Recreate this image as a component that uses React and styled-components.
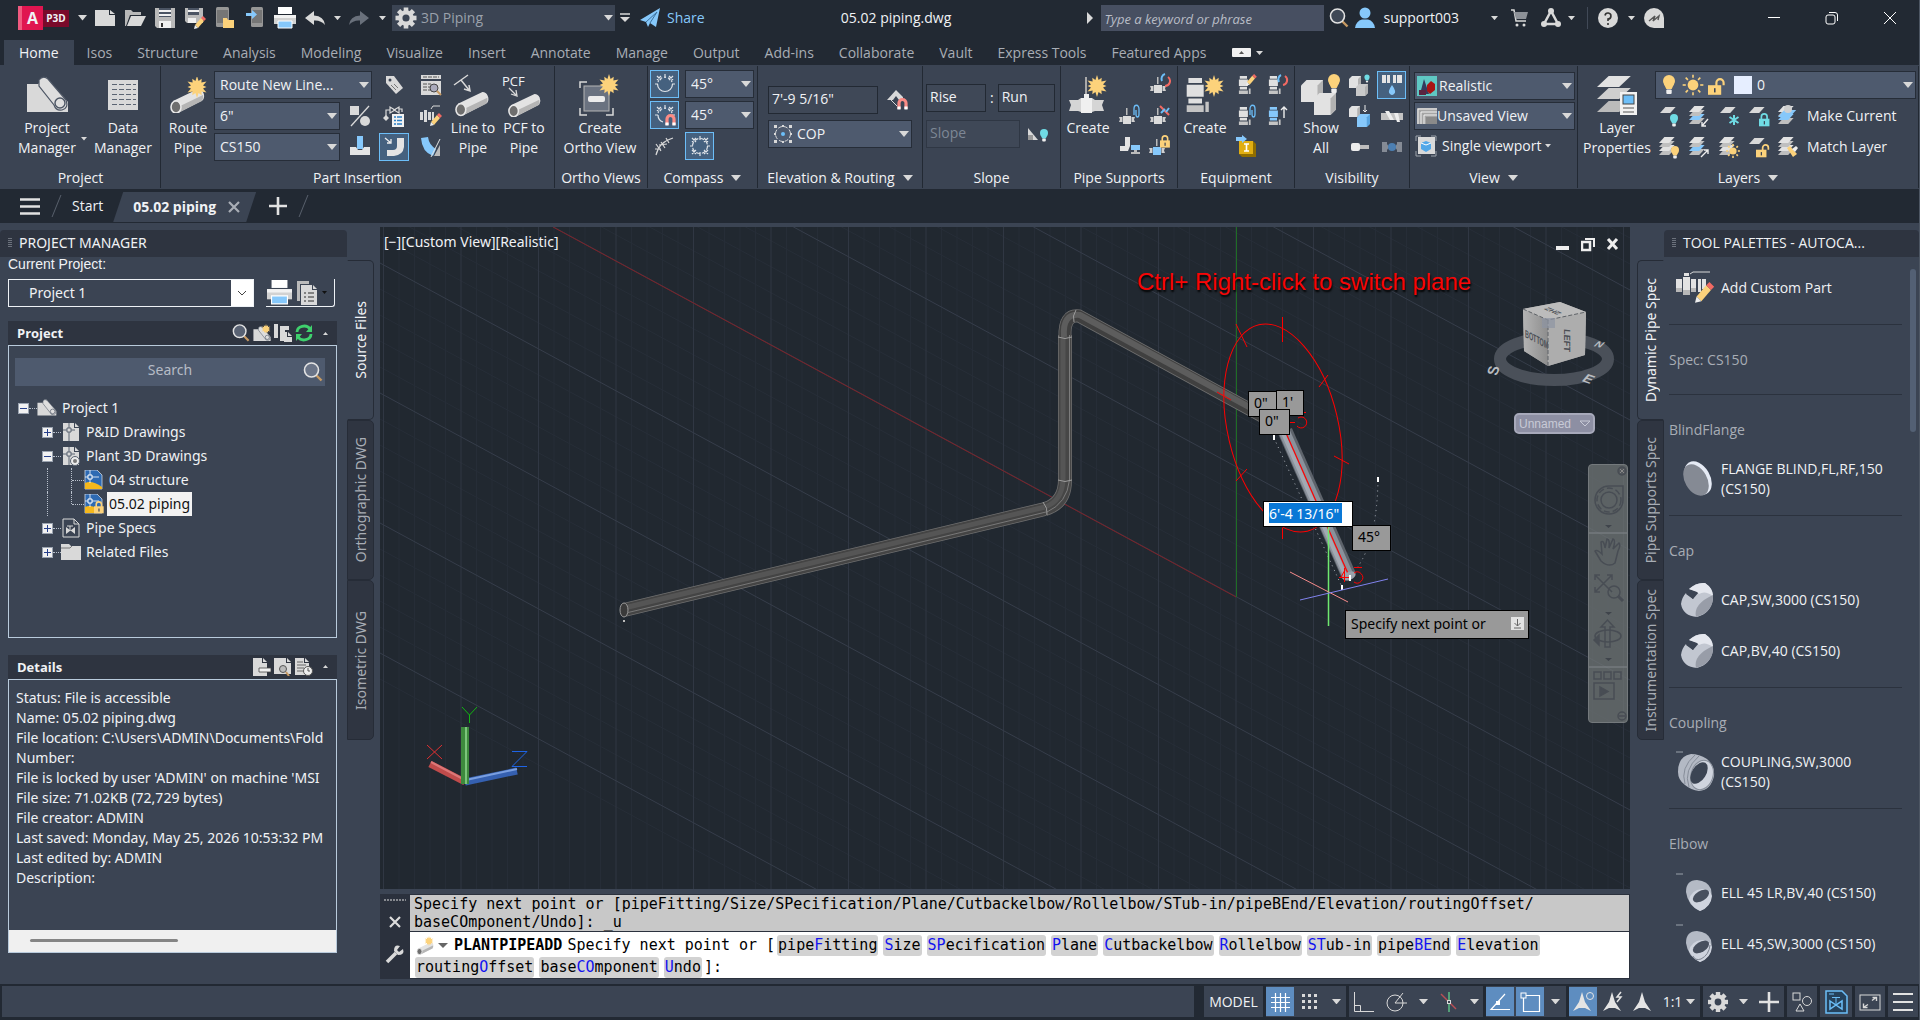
import React from "react";
import styled, { createGlobalStyle, css } from "styled-components";

const c = {
  dark: "#222933",
  panel: "#3b4453",
  head: "#2e3440",
  field: "#4e5a6e",
  text: "#f0f2f5",
  dim: "#a8adb5",
  icon: "#d9d9d9",
  blue: "#6cbef8",
  sky: "#86c8fb",
  yellow: "#fcd27b",
  teal: "#6fdbe4",
  red: "#f26a63",
  frame: "#b9cbdc",
  active: "#5e8dc0",
};

const ui = `"Open Sans", "Noto Sans", sans-serif`;
const wide = `"Noto Sans", "Open Sans", sans-serif`;
const mono = `"DejaVu Sans Mono", "Liberation Mono", monospace`;

const Global = createGlobalStyle`
  *, *::before, *::after { box-sizing: border-box; }
  body { margin: 0; background: ${c.dark}; color: ${c.text}; font: 14px/20px ${ui}; }
  button, input, select { font: inherit; color: inherit; margin: 0; }
  svg { display: block; flex: none; }
  ul, p, h2, h3 { margin: 0; padding: 0; list-style: none; font: inherit; }
`;

/* ------------------------------------------------------------------ */
/* Icon building blocks                                                */
/* ------------------------------------------------------------------ */

const Svg = ({ w = 24, h, vb, children }) => (
  <svg width={w} height={h || w} viewBox={vb || `0 0 ${w} ${h || w}`} fill="none" aria-hidden="true">
    {children}
  </svg>
);

const Burst = ({ x, y, r, fill = c.yellow }) => {
  const pts = [];
  for (let i = 0; i < 24; i++) {
    const a = (Math.PI * i) / 12 - Math.PI / 2;
    const rr = i % 2 ? r * 0.56 : i % 4 ? r * 0.86 : r;
    pts.push(`${(x + rr * Math.cos(a)).toFixed(1)},${(y + rr * Math.sin(a)).toFixed(1)}`);
  }
  return <polygon points={pts.join(" ")} fill={fill} />;
};

const Tube = ({ x = 0, y = 0, s = 1 }) => (
  <g transform={`translate(${x} ${y}) scale(${s})`}>
    <path d="M4 13 L29 1 A6 7 0 0 1 34 12 L9 25 Z" fill="#e3e3e3" />
    <path d="M7 20 L34 7 A6 7 0 0 1 33 13 L9 25 Z" fill="#b5b5b5" />
    <ellipse cx="7" cy="19" rx="5" ry="6" fill="#6e6e6e" stroke="#e8e8e8" strokeWidth="1.6" />
  </g>
);

const Sheet = ({ x, y, w = 13, h = 8, fill = c.icon }) => (
  <path d={`M${x + w * 0.45} ${y} H${x + w * 1.3} L${x + w * 0.85} ${y + h} H${x} Z`} fill={fill} />
);

const Bulb = ({ x, y, r, fill = c.yellow }) => (
  <g>
    <circle cx={x} cy={y} r={r} fill={fill} />
    <path d={`M${x - r * 0.85} ${y + r * 0.5} L${x - r * 0.45} ${y + r * 1.35} H${x + r * 0.45} L${x + r * 0.85} ${y + r * 0.5}Z`} fill={fill} />
    <rect x={x - r * 0.45} y={y + r * 1.4} width={r * 0.9} height={r * 0.75} rx="1" fill="#eee" />
  </g>
);

const Lock = ({ x, y, s = 1, fill = c.yellow, open }) => (
  <g transform={`translate(${x} ${y}) scale(${s})`}>
    <path d={open ? "M7 7 V4 a3 3 0 0 1 6 0 V6" : "M2.5 7 V4 a3 3 0 0 1 6 0 V7"} stroke={fill} strokeWidth="1.8" />
    <rect x="0" y="6" width="11" height="8" fill={fill} />
    <rect x="5" y="8.500" width="1.300" height="3.500" fill={c.panel} />
  </g>
);

const Sun = ({ x, y, r }) => (
  <g stroke={c.yellow} strokeWidth="1.600">
    <circle cx={x} cy={y} r={r * 0.6} fill={c.yellow} stroke="none" />
    {[0, 45, 90, 135, 180, 225, 270, 315].map((a) => (
      <line key={a} x1={x + r * 0.8} y1={y} x2={x + r * 1.15} y2={y} transform={`rotate(${a} ${x} ${y})`} />
    ))}
  </g>
);

const Pencil = ({ x, y, s = 1 }) => (
  <g transform={`translate(${x} ${y}) scale(${s})`}>
    <path d="M1 9 L7 2 L10 5 L4 12 Z" fill={c.yellow} />
    <path d="M7 2 L9 0 L12 3 L10 5 Z" fill={c.red} />
    <path d="M1 9 L0 13 L4 12 Z" fill="#eee" />
  </g>
);

const Box3 = ({ x, y, s, fill = "#e2e2e2", side = "#b2b2b2" }) => (
  <g>
    <path d={`M${x} ${y + s * 0.25} L${x + s * 0.25} ${y} H${x + s} V${y + s * 0.75} L${x + s * 0.75} ${y + s} H${x}Z`} fill={fill} />
    <path d={`M${x + s} ${y} V${y + s * 0.75} L${x + s * 0.75} ${y + s} V${y + s * 0.25}Z`} fill={side} />
  </g>
);

const Magnet = ({ x, y, s = 1 }) => (
  <g transform={`translate(${x} ${y}) scale(${s})`}>
    <path d="M2 12 V6 a3.500 3.500 0 0 1 7 0 V12" stroke="#fa8b85" strokeWidth="3.200" />
    <path d="M0.400 9.500 H3.600 V12.500 H0.400Z M7.400 9.500 H10.600 V12.500 H7.400Z" fill="#fff" />
  </g>
);

const Roll = ({ s = 1, x = 0, y = 0 }) => (
  <g transform={`translate(${x} ${y}) scale(${s})`}>
    <path d="M1 8 H12 L20 1 L42 26 V36 H1Z" fill={c.icon} />
    <path d="M13 4 Q17 -1 22 3 L40 24 Q43 32 36 34 Q30 35 28 29 L13 10Z" fill="#dedede" stroke="#4c5564" strokeWidth="1.200" />
    <circle cx="34" cy="27" r="5" stroke="#4c5564" strokeWidth="1.400" />
  </g>
);

const Caret = ({ w = 10, color = c.icon }) => (
  <svg width={w} height={w * 0.6} viewBox="0 0 10 6" aria-hidden="true">
    <path d="M0 0 H10 L5 6Z" fill={color} />
  </svg>
);

const cross = (x, y) => `M${x - 2} ${y - 2} l4 4 m0 -4 l-4 4`;

const Ring = ({ full, half }) => (
  <g stroke="#dfe3e8" strokeWidth="1.200">
    {full ? (
      <circle cx="12" cy="12" r="7.500" strokeDasharray="3.900 2" />
    ) : (
      <path d={half ? "M5 12 A7.500 7.500 0 0 0 10 19" : "M4.500 12 A7.500 7.500 0 0 0 19.500 12"} />
    )}
    {!full && <path d="M5 10 A7.500 7.500 0 0 1 19 10" strokeDasharray="2 2" />}
    <path d={`M2 12 H5 M19 12 H22 M12 2 V6 ${full ? "M12 18 V22" : ""}`} />
    <path d={`${cross(6, 6)} ${cross(18, 6)} ${full ? cross(6, 18) + cross(18, 18) : ""}`} />
  </g>
);

const Valve = ({ x = 0, y = 0, s = 1, fill = "#dcdcdc" }) => (
  <g transform={`translate(${x} ${y}) scale(${s})`}>
    <rect x="7" y="0" width="1.500" height="7" fill="#bbb" />
    <rect x="4" y="8" width="8" height="8" fill={fill} />
    <path d="M0 9 H3.500 V14 H0 L1 11.500Z M12.500 9 H16 L15 11.500 L16 14 H12.500Z" fill="#cfcfcf" />
  </g>
);

const Pump = ({ x = 0, y = 0, s = 1, fill = "#e0e0e0" }) => (
  <g transform={`translate(${x} ${y}) scale(${s})`}>
    <path d="M2 0 H10 V3 H2Z M1 4 H11 V11 H1Z M2 12 H10 V15 H2Z" fill={fill} />
    <path d="M1 16 H11 V20 H1Z M12 14 H14 V20 H12Z" fill="#c4c4c4" />
  </g>
);

const Layers3 = ({ blue, x = 0 }) => (
  <g>
    {[12, 8, 4, 0].map((y) => (
      <Sheet key={y} x={x} y={y + 2} w={12} h={6} fill={blue && y === 8 ? c.sky : y % 8 ? "#bfbfbf" : "#e2e2e2"} />
    ))}
  </g>
);

const GearShape = ({ x, y, r, hole = c.panel }) => (
  <g transform={`translate(${x} ${y})`}>
    {[0, 45, 90, 135].map((a) => (
      <rect key={a} x={-r * 0.22} y={-r} width={r * 0.44} height={r * 2} fill={c.icon} transform={`rotate(${a})`} />
    ))}
    <circle r={r * 0.74} fill={c.icon} />
    <circle r={r * 0.34} fill={hole} />
  </g>
);

const LensShape = ({ s = 20, fill = "#596273" }) => (
  <Svg w={s} vb="0 0 20 20">
    <path d="M13 13 L18.500 18.500" stroke="#c79a63" strokeWidth="2.400" />
    <circle cx="8.500" cy="8" r="7" fill={fill} stroke="#e3e3e3" strokeWidth="1.600" />
  </Svg>
);

const Printer = ({ s = 22 }) => (
  <Svg w={s} vb="0 0 22 22">
    <path d="M4 0 H18 V7 H4Z" fill="#fff" />
    <path d="M0 8 H22 V17 H0Z" fill="#d2d2d2" />
    <path d="M0 8 H22 V11 H0Z" fill="#f2f2f2" />
    <path d="M4 14 H18 V21 H4Z" fill={c.sky} stroke="#fff" />
  </Svg>
);

const Doc = ({ x = 0, y = 0, w = 16, h = 18 }) => (
  <path d={`M${x} ${y} H${x + w - 5} V${y + 5} H${x + w} V${y + h} H${x}Z M${x + w - 4} ${y} L${x + w} ${y + 4} H${x + w - 4}Z`} fill={c.icon} />
);

/* ------------------------------------------------------------------ */
/* Shared controls                                                     */
/* ------------------------------------------------------------------ */

const Button = styled.button`
  display: inline-flex;
  align-items: center;
  justify-content: center;
  gap: 4px;
  padding: 0;
  border: 0;
  background: none;
  white-space: nowrap;
`;

const IconButton = styled(Button)`
  width: ${(p) => p.$w || 30}px;
  height: ${(p) => p.$h || 28}px;
  flex: none;
  ${(p) =>
    p.$on &&
    css`
      background: #45617f;
      border: 1px solid ${c.blue};
    `}
`;

const SelectBox = styled.div`
  position: relative;
  display: flex;
  align-items: center;
  gap: ${(p) => p.$gap ?? 4}px;
  width: ${(p) => (p.$w ? `${p.$w}px` : "auto")};
  height: 28px;
  padding-left: ${(p) => p.$pl ?? 5}px;
  color: ${c.text};
  background: ${c.field};
  border: 1px solid #262d38;
  grid-column: ${(p) => p.$span || "auto"};
`;

const NativeSelect = styled.select`
  flex: 1;
  min-width: 0;
  height: 24px;
  padding: 0 14px 0 0;
  border: 0;
  appearance: none;
  background: none;
  line-height: 24px;
`;

const CaretSlot = styled.span`
  position: absolute;
  right: 2px;
  pointer-events: none;
`;

const Select = ({ label, value, w, span, icon, pl, gap }) => (
  <SelectBox $w={w} $span={span} $pl={pl} $gap={gap}>
    {icon}
    <NativeSelect aria-label={label} defaultValue={value}>
      <option>{value}</option>
    </NativeSelect>
    <CaretSlot><Caret /></CaretSlot>
  </SelectBox>
);

const TextField = styled.input`
  width: ${(p) => p.$w}px;
  height: 28px;
  padding: 0 3px 4px;
  border: 1px solid #222933;
  background: #3f4857;
  &:disabled { border-color: #2f3744; }
  &:disabled, &::placeholder { color: #7d8795; opacity: 1; }
`;

/* ------------------------------------------------------------------ */
/* Title bar                                                           */
/* ------------------------------------------------------------------ */

const Shell = styled.div`
  display: flex;
  flex-direction: column;
  min-height: 100vh;
  height: 100vh;
  border-right: 1px solid #4d5663;
  overflow: hidden;
`;

const TitleBar = styled.header`
  display: flex;
  align-items: center;
  height: 36px;
  padding-left: 18px;
`;

const Logo = styled.span`
  display: flex;
  align-items: center;
  margin-right: 5px;
  font-weight: 700;
  span:first-child { width: 25px; line-height: 24px; background: #e01550; text-align: center; font-size: 16px; border-left: 4px solid #f05a80; }
  span:last-child { width: 26px; line-height: 17px; background: #7a0a2a; text-align: center; font-size: 10px; }
`;

const Workspace = styled(SelectBox)`
  width: 223px;
  height: 26px;
  padding-left: 3px;
  margin-left: 2px;
  border: 0;
  background: ${c.panel};
  color: #9aa1ab;
`;

const Push = styled.span` flex: ${(p) => p.$n || 1}; `;

const Share = styled(Button)` margin-left: 5px; gap: 7px; color: ${c.sky}; `;

const Finder = styled.input`
  width: 223px;
  height: 26px;
  margin-left: 8px;
  padding: 0 3px;
  border: 0;
  background: #474f61;
  font-style: italic;
  &::placeholder { color: #b9bdc6; opacity: 1; font-size: 13px; }
`;

const User = styled(Button)` gap: 7px; margin-right: 32px; `;
const Rule = styled.span` width: 1px; height: 22px; margin: 0 7px; background: #414957; `;
const TitleText = styled.h2` color: ${c.text}; `;

const quick = [
  ["New", <Svg w={22}><path d="M1 3 H15 V8 H21 V19 H1Z" fill={c.icon} /><path d="M16 3 L21 7 H16Z" fill={c.icon} /></Svg>],
  ["Open", <Svg w={22}><path d="M1 3 H7 L9 5 H17 V8 H6 L2 19 H1Z" fill="#b8b8b8" /><path d="M7 9 H22 L17 19 H3Z" fill={c.icon} /></Svg>],
  ["Save", <Svg w={22}><path d="M1 1 H21 V21 H3 L1 19Z" fill="#b9b9b9" /><path d="M5 1 H17 V10 H5Z" fill="#4b5463" /><path d="M5 3 H17 V5 H5Z M5 7 H17 V9 H5Z M5 14 H17 V21 H5Z" fill="#f0f0f0" /><path d="M7 16 H9 V20 H7Z" fill="#333" /></Svg>],
  ["Save As", <Svg w={22}><path d="M1 1 H19 V16 H3 L1 14Z" fill="#b9b9b9" /><path d="M4 1 H15 V8 H4Z" fill="#4b5463" /><path d="M4 3 H15 V5 H4Z M4 11 H12 V16 H4Z" fill="#f0f0f0" /><Pencil x={10} y={9} /></Svg>],
  ["Open from mobile", <Svg w={22}><rect x="2" y="0" width="13" height="20" rx="1.500" fill="#969696" /><path d="M3 3 H14 V16 H3Z" fill="#767676" /><path d="M9 11 H13 L14 13 H20 V21 H9Z" fill={c.yellow} /></Svg>],
  ["Save to mobile", <Svg w={22}><rect x="7" y="0" width="12" height="20" rx="1.500" fill="#969696" /><path d="M8 3 H18 V16 H8Z" fill="#767676" /><path d="M2 6 H8 V3 L13 7.500 L8 12 V9 H2Z" fill={c.sky} /></Svg>],
  ["Plot", <Printer />],
  ["Undo", <Svg w={22}><path d="M1 11 L10 4 V8.500 Q20 9 21 18 Q17 13 10 13.500 V18Z" fill={c.icon} /></Svg>],
];

const TopBar = () => (
  <TitleBar>
    <Logo><span>A</span><span>P3D</span></Logo>
    <IconButton $w={16} aria-label="Application menu"><Caret w={9} /></IconButton>
    {quick.map(([n, i]) => <IconButton key={n} aria-label={n}>{i}</IconButton>)}
    <IconButton $w={14} aria-label="Undo list"><Caret w={7} /></IconButton>
    <IconButton aria-label="Redo"><Svg w={22}><path d="M21 11 L12 4 V8.500 Q2 9 1 18 Q5 13 12 13.500 V18Z" fill="#69707b" /></Svg></IconButton>
    <IconButton $w={16} aria-label="Redo list"><Caret w={7} /></IconButton>
    <Workspace>
      <Svg w={22}><GearShape x={11} y={11} r={10.5} /></Svg>
      <NativeSelect aria-label="Workspace" defaultValue="3D Piping"><option>3D Piping</option></NativeSelect>
      <CaretSlot><Caret w={9} /></CaretSlot>
    </Workspace>
    <IconButton $w={20} aria-label="Customize toolbar"><Svg w={10} h={10}><path d="M0 1 H10" stroke={c.icon} strokeWidth="1.500" /><path d="M0 4 H10 L5 9Z" fill={c.icon} /></Svg></IconButton>
    <Share>
      <Svg w={20}><path d="M0 12 L20 0 L16 19 L10 15 L8 19 L6 14Z" fill={c.sky} /><path d="M6 14 L17 4 L10 15" stroke="#3b6f9c" /></Svg>
      Share
    </Share>
    <Push />
    <TitleText>05.02 piping.dwg</TitleText>
    <Push />
    <Svg w={6} h={12}><path d="M0 0 L6 6 L0 12Z" fill={c.icon} /></Svg>
    <Finder aria-label="Search help" placeholder="Type a keyword or phrase" />
    <IconButton aria-label="Search"><LensShape fill="#3f4856" /></IconButton>
    <User>
      <Svg w={22}><circle cx="11" cy="6" r="5.500" fill={c.sky} /><path d="M1 21 Q2 14 8 12.500 H14 Q20 14 21 21Z" fill={c.sky} /></Svg>
      support003
    </User>
    <Caret w={7} />
    <IconButton $w={42} aria-label="App store"><Svg w={20}><path d="M2 2 H5 L7 13 H17" stroke={c.icon} strokeWidth="1.500" /><path d="M5 4 H19 L17 11 H7Z" fill="#8d9198" /><circle cx="8" cy="17" r="1.500" fill={c.icon} /><circle cx="15" cy="17" r="1.500" fill={c.icon} /></Svg></IconButton>
    <IconButton $w={22} aria-label="Autodesk apps"><Svg w={20}><path d="M10 3 L3 16 H17Z" stroke={c.icon} strokeWidth="2.500" /><circle cx="10" cy="3" r="3" fill={c.icon} /><circle cx="3" cy="16" r="3" fill={c.icon} /><circle cx="17" cy="16" r="3" fill={c.icon} /></Svg></IconButton>
    <IconButton $w={18} aria-label="Apps list"><Caret w={7} /></IconButton>
    <Rule />
    <IconButton $w={26} aria-label="Help"><Svg w={20}><circle cx="10" cy="10" r="10" fill={c.icon} /><path d="M7 7.500 a3 3 0 1 1 3 3.500 V13 M10 15 V17" stroke="#333" strokeWidth="1.600" /></Svg></IconButton>
    <IconButton $w={20} aria-label="Help list"><Caret w={7} /></IconButton>
    <IconButton $w={26} aria-label="Assistant"><Svg w={20}><path d="M10 0 a10 10 0 0 1 10 10 V20 H10 A10 10 0 0 1 10 0Z" fill={c.icon} /><path d="M5 13 L11 8 L9 13 L15 8 L14 12" stroke="#555" strokeWidth="1.400" /></Svg></IconButton>
    <Push $n="0 0 78px" />
    <IconButton $w={58} aria-label="Minimize"><Svg w={14}><path d="M1 6.500 H13" stroke="#fff" /></Svg></IconButton>
    <IconButton $w={58} aria-label="Restore"><Svg w={14}><rect x="1" y="4" width="9" height="9" rx="2" stroke="#fff" /><path d="M4 1.500 H10 Q12.500 1.500 12.500 4 V10" stroke="#fff" /></Svg></IconButton>
    <IconButton $w={58} aria-label="Close"><Svg w={14}><path d="M1 1 L13 13 M13 1 L1 13" stroke="#fff" /></Svg></IconButton>
  </TitleBar>
);

/* ------------------------------------------------------------------ */
/* Ribbon                                                              */
/* ------------------------------------------------------------------ */

const Tabs = styled.nav`
  display: flex;
  align-items: center;
  gap: 1px;
  height: 29px;
  padding: 4px 0 0 4px;
`;

const Tab = styled(Button)`
  height: 25px;
  padding: 0 ${(p) => (p.$on ? 15 : 12)}px;
  color: ${(p) => (p.$on ? c.text : c.dim)};
  background: ${(p) => (p.$on ? c.panel : "none")};
`;

const Ribbon = styled.section`
  display: flex;
  height: 124px;
  padding: 1px 0 0 1px;
  background: ${c.panel};
`;

const Group = styled.section`
  display: flex;
  flex-direction: column;
  flex: ${(p) => (p.$w ? `0 0 ${p.$w}px` : "1 1 0")};
  min-width: 0;
  height: 122px;
  border-right: 1px solid ${c.dark};
`;

const Tools = styled.div`
  display: flex;
  flex: 1;
  align-items: flex-start;
  gap: ${(p) => p.$gap ?? 4}px;
  padding: ${(p) => p.$pt ?? 5}px 0 0 ${(p) => p.$pl ?? 4}px;
`;

const GroupTitle = styled.h3`
  display: flex;
  align-items: center;
  justify-content: center;
  gap: 8px;
  height: 21px;
  white-space: nowrap;
`;

const Big = styled(Button)`
  position: relative;
  flex-direction: column;
  gap: 0;
  width: ${(p) => p.$w}px;
  span { display: flex; align-items: center; justify-content: center; height: 47px; }
`;

const SideCaret = styled.i`
  position: absolute;
  right: -5px;
  top: 66px;
`;

const Cells = styled.div`
  display: grid;
  grid-template-columns: ${(p) => p.$cols};
  grid-auto-rows: 28px;
  gap: 3px ${(p) => p.$gap ?? 2}px;
  align-items: center;
  justify-items: ${(p) => (p.$fill ? "stretch" : "center")};
`;

const Stack = styled.div`
  display: flex;
  flex-direction: column;
  gap: ${(p) => p.$gap ?? 3}px;
`;

const Line = styled.div`
  display: flex;
  align-items: center;
  gap: ${(p) => p.$gap ?? 6}px;
`;

const BigTool = ({ w, icon, a, b, caret }) => (
  <Big $w={w}>
    <span>{icon}</span>
    <div>{a}</div>
    {b && <div>{b}</div>}
    {caret && <SideCaret><Caret w={6} /></SideCaret>}
  </Big>
);

const Tool = ({ n, on, w, children }) => (
  <IconButton $w={w || 28} $on={on} aria-label={n}>
    {children}
  </IconButton>
);

const TextTool = styled(Button)`
  justify-content: flex-start;
  height: 28px;
  gap: 4px;
`;

const PcfLabel = styled.b`
  position: absolute;
  top: 0;
  left: 2px;
  font-weight: 400;
  font-size: 13px;
`;

const menu = ["Home", "Isos", "Structure", "Analysis", "Modeling", "Visualize", "Insert", "Annotate", "Manage", "Output", "Add-ins", "Collaborate", "Vault", "Express Tools", "Featured Apps"];

const RibbonBar = () => (
  <>
    <Tabs>
      {menu.map((m, i) => <Tab key={m} $on={i === 0}>{m}</Tab>)}
      <Tab aria-label="Ribbon display">
        <Svg w={32} h={12}><rect x="1" y="1" width="19" height="9" rx="1" fill="#f1f1f1" /><path d="M8 7 L10.500 4 L13 7Z" fill="#555" /><path d="M25 4 H32 L28.500 8Z" fill={c.icon} /></Svg>
      </Tab>
    </Tabs>
    <Ribbon>
      <Group $w={160}>
        <Tools $pl={11} $gap={6}>
          <BigTool w={70} a="Project" b="Manager" caret icon={<Svg w={43} h={38}><Roll /></Svg>} />
          <BigTool w={70} a="Data" b="Manager" icon={<Svg w={30}><path d="M0 0 H30 V30 H0Z" fill={c.icon} /><path d="M4 4.500 H28 M4 9.500 H28 M4 14.500 H28 M4 19.500 H28 M4 24.500 H28" stroke="#5b6472" strokeDasharray="5 2" /></Svg>} />
        </Tools>
        <GroupTitle>Project</GroupTitle>
      </Group>

      <Group $w={394}>
        <Tools $gap={3}>
          <BigTool w={46} a="Route" b="Pipe" icon={<Svg w={40} h={36}><Tube x={1} y={11} /><Burst x={29} y={10} r={11} /></Svg>} />
          <Cells $cols="126px 25px 30px 30px" $gap={7} $fill>
            <Select label="Line number" value="Route New Line..." span="span 2" />
            <Tool n="Tag" w={30}><Svg w={24}><path d="M4 3 H12 L21 15 L14 21 L4 10Z" fill={c.icon} /><circle cx="8" cy="7" r="1.500" fill={c.panel} /><path d="M9 12 L14 17 M12 11 L16 15" stroke="#777" /></Svg></Tool>
            <Tool n="Spec viewer" w={30}><Svg w={24}><path d="M2 2 H22 V6 H2Z M2 8 H22 V22 H2Z" fill={c.icon} /><path d="M4 4 H20 M4 11 H12 M4 14 H11 M4 17 H11" stroke="#555" strokeDasharray="4 1" /><circle cx="15" cy="15" r="4" fill="#aab" stroke="#444" /><path d="M18 18 L22 22" stroke="#c79a63" strokeWidth="2" /></Svg></Tool>
            <Select label="Pipe size" value={'6"'} />
            <Tool n="Toggle fixed" w={25}><Svg w={24}><path d="M2 2 H11 V11 H2Z" fill={c.icon} /><circle cx="17" cy="17" r="5" fill={c.icon} /><path d="M3 22 L21 2" stroke={c.icon} strokeWidth="1.300" /></Svg></Tool>
            <Tool n="Assign tag" w={30}><Svg w={24}><path d="M4 12 V6 H8 M20 8 V5 H17 M8 3 V9 L13 6Z M17 3 V9 L12 6Z" stroke={c.icon} strokeWidth="1.200" /><path d="M4 11 L7 14 L4 17 L1 14Z" fill={c.icon} /><rect x="10" y="10" width="12" height="13" fill="#f2f2f2" /><path d="M12 13 H14 M12 16.500 H14 M12 20 H14 M15 13 H20 M15 16.500 H20 M15 20 H20" stroke="#2c7fc4" strokeWidth="1.500" /></Svg></Tool>
            <Tool n="Custom part" w={30}><Svg w={24}><path d="M1 8 H4 V16 H1Z M5 6 H8 V18 H5Z M9 8 H12 V16 H9Z M13 8 H15 V16 H13Z" fill={c.icon} /><path d="M12 5 L14 2 H21" stroke={c.icon} /><Pencil x={11} y={9} /></Svg></Tool>
            <Select label="Pipe spec" value="CS150" />
            <Tool n="Stub-in" w={25}><Svg w={24}><rect x="9" y="1" width="6" height="13" fill={c.sky} /><path d="M2 12 H8 L10 15 H14 L16 12 H22 V20 H2Z" fill="#e4e4e4" /></Svg></Tool>
            <Tool n="Elbow" on w={30}><Svg w={24}><path d="M15 3 H22 V12 Q21 20 12 21 H5 V15 H11 Q15 15 15 11Z" fill="#e4e4e4" /><path d="M3 3 L9 8 M9 4 V8 H5" stroke="#eee" strokeWidth="1.300" /></Svg></Tool>
            <Tool n="Pipe bend" w={30}><Svg w={24}><path d="M2 3 L9 2 Q10 10 17 14 L14 21 Q3 17 2 3Z" fill={c.sky} /><path d="M15 21 L21 10 V21Z" fill="#bbb" /><path d="M12 22 L21 4" stroke="#e4e4e4" /></Svg></Tool>
          </Cells>
          <BigTool w={48} a="Line to" b="Pipe" icon={<Svg w={40} h={44}><path d="M1 12 L15 2 M8 7 L16 17 M11 16 L17 18 L16 12" stroke={c.icon} strokeWidth="1.500" /><Tube x={1} y={18} s={0.98} /></Svg>} />
          <Big $w={48}>
            <PcfLabel>PCF</PcfLabel>
            <span><Svg w={40} h={44}><path d="M5 15 L12 22 M7 21 L13 23 L12 17" stroke={c.icon} strokeWidth="1.300" /><Tube x={3} y={20} s={0.95} /></Svg></span>
            <div>PCF to</div>
            <div>Pipe</div>
          </Big>
        </Tools>
        <GroupTitle>Part Insertion</GroupTitle>
      </Group>

      <Group $w={93}>
        <Tools $pl={5}>
          <BigTool w={80} a="Create" b="Ortho View" icon={<Svg w={42}><rect x="5" y="12" width="25" height="25" fill="#6a7280" stroke="#b5b5b5" /><path d="M1 14 V8 H8 M1 34 V41 H8 M34 34 V41 H27" stroke={c.icon} strokeWidth="1.500" /><rect x="9" y="22" width="17" height="6" rx="2" fill="#ececec" /><Burst x={30} y={11} r={11} /></Svg>} />
        </Tools>
        <GroupTitle>Ortho Views</GroupTitle>
      </Group>

      <Group $w={110}>
        <Tools $pl={2} $pt={4}>
          <Cells $cols="29px 69px" $gap={6} $fill>
            <Tool n="Toggle compass" on w={29}><Svg w={24}><Ring /></Svg></Tool>
            <Select label="Compass snap" value="45°" />
            <Tool n="Toggle snaps" on w={29}><Svg w={24}><Ring half /><Magnet x={12} y={10} /></Svg></Tool>
            <Select label="Tick marks" value="45°" />
            <Tool n="Tolerance" w={29}><Svg w={24}><path d="M3 21 Q6 8 20 4 M3 10 L8 17 M2 15 H8 M8 8 L12 14 M6 11 L14 10 M13 4 L16 9" stroke={c.icon} strokeWidth="1.200" /></Svg></Tool>
            <Tool n="Tick mark display" on w={29}><Svg w={24}><Ring full /></Svg></Tool>
          </Cells>
        </Tools>
        <GroupTitle>Compass <Caret /></GroupTitle>
      </Group>

      <Group $w={165}>
        <Tools $pl={10} $pt={20}>
          <Stack $gap={6}>
            <Line>
              <TextField $w={110} aria-label="Elevation" defaultValue={'7\'-9 5/16"'} />
              <Tool n="Snap elevation"><Svg w={24}><path d="M1 12 L10 2 L17 9 V12 H13 L10 8 L7 12Z" fill={c.icon} /><path d="M5 12 L11 18" stroke={c.icon} /><Magnet x={11} y={9} /></Svg></Tool>
            </Line>
            <Select w={144} pl={4} gap={4} label="Routing offset" value="COP" icon={<Svg w={20}><path d="M1 1 H4 V4 H1Z M16 1 H19 V4 H16Z M1 16 H4 V19 H1Z M16 16 H19 V19 H16Z M9 1 H11 V3 H9Z M9 17 H11 V19 H9Z M1 9 H3 V11 H1Z M17 9 H19 V11 H17Z" fill={c.icon} /><circle cx="10" cy="10" r="7.500" stroke={c.icon} strokeDasharray="4 2" /><circle cx="10" cy="10" r="2" fill={c.blue} /></Svg>} />
          </Stack>
        </Tools>
        <GroupTitle>Elevation &amp; Routing <Caret /></GroupTitle>
      </Group>

      <Group $w={138}>
        <Tools $pl={3} $pt={18}>
          <Stack $gap={8}>
            <Line $gap={4}>
              <TextField $w={60} aria-label="Rise" defaultValue="Rise" />
              <span>:</span>
              <TextField $w={57} aria-label="Run" defaultValue="Run" />
            </Line>
            <Line $gap={4}>
              <TextField $w={94} aria-label="Slope" placeholder="Slope" disabled />
              <Tool n="Show slope"><Svg w={24}><path d="M2 6 L12 18 H2Z" fill={c.icon} /><path d="M2 18 V13 L7 13 V18Z" fill="#999" /><Bulb x={18} y={11} r={4} fill={c.teal} /></Svg></Tool>
            </Line>
          </Stack>
        </Tools>
        <GroupTitle>Slope</GroupTitle>
      </Group>

      <Group $w={117}>
        <Tools $pl={2} $gap={3}>
          <BigTool w={50} a="Create" icon={<Svg w={40} h={42}><path d="M18 3 V24" stroke="#aaa" strokeWidth="2" /><path d="M1 26 H10 L13 24 H24 L27 26 H36 L34 31 L36 37 H27 L24 38 H13 L10 37 H1 L3 31Z" fill="#d5d5d5" /><path d="M13 24 H24 V39 H13Z M16 20 H21 V24 H16Z" fill="#f0f0f0" /><Burst x={29} y={12} r={11} /></Svg>} />
          <Cells $cols="28px 28px">
            <span />
            <Tool n="Convert support"><Svg w={24}><Valve x={2} y={4} /><path d="M14 8 a5 5 0 0 1 3 -7" stroke={c.blue} strokeWidth="2" /><path d="M17 13 a5 5 0 0 0 3 -9" stroke={c.red} strokeWidth="2" /></Svg></Tool>
            <Tool n="Attach support"><Svg w={24}><Valve x={1} y={4} /><path d="M16 11 V5 a2 3 0 0 1 5 0 V10 a1 2 0 0 1 -3 0 V6" stroke={c.blue} strokeWidth="1.300" /></Svg></Tool>
            <Tool n="Detach support"><Svg w={24}><Valve x={2} y={4} /><path d="M12 2 L21 11" stroke={c.red} strokeWidth="2" /><path d="M13 9 L17 5 M18 8 L21 4" stroke={c.blue} strokeWidth="2" /></Svg></Tool>
            <Tool n="Dummy leg"><Svg w={24}><path d="M7 2 H12 V11 H12 L10 16 H2 V11 H7Z" fill="#e4e4e4" /><path d="M13 10 H22 V15 H13Z" fill={c.sky} /><path d="M16 15 H19 V17 H22 V19 H13 V17 H16Z" fill="#bbb" /></Svg></Tool>
            <Tool n="Lock support"><Svg w={24}><Valve x={1} y={4} fill={c.sky} /><Lock x={12} y={0} s={0.9} /></Svg></Tool>
          </Cells>
        </Tools>
        <GroupTitle>Pipe Supports</GroupTitle>
      </Group>

      <Group $w={117}>
        <Tools $pl={2} $gap={3}>
          <BigTool w={50} a="Create" icon={<Svg w={40} h={40}><Pump x={0} y={3} s={1.7} /><Burst x={29} y={11} r={11} /></Svg>} />
          <Cells $cols="28px 28px">
            <Tool n="Modify equipment"><Svg w={24}><Pump x={3} y={3} s={0.9} /><Pencil x={11} y={1} s={0.9} /></Svg></Tool>
            <Tool n="Convert equipment"><Svg w={24}><Pump x={3} y={3} s={0.9} /><path d="M14 9 a5 5 0 0 1 2 -7" stroke={c.blue} strokeWidth="2" /><path d="M18 12 a5 5 0 0 0 2 -9" stroke={c.red} strokeWidth="2" /></Svg></Tool>
            <Tool n="Attach equipment"><Svg w={24}><Pump x={3} y={3} s={0.9} /><path d="M15 11 V5 a2 3 0 0 1 5 0 V10 a1 2 0 0 1 -3 0 V6" stroke={c.blue} strokeWidth="1.300" /></Svg></Tool>
            <Tool n="Detach equipment"><Svg w={24}><Pump x={3} y={3} s={0.9} fill={c.sky} /><path d="M19 14 V3 M16 6 L19 3 L22 6" stroke="#eee" strokeWidth="1.400" /></Svg></Tool>
            <Tool n="Import from Inventor"><Svg w={24}><path d="M4 6 H18 L21 9 V22 H7 L4 19Z" fill="#8f6d00" /><path d="M4 6 H18 V19 H4Z" fill="#e0ae12" /><path d="M9 9 H14 M11.500 9 V16 M9 16 H14" stroke="#fff" strokeWidth="1.600" /><path d="M1 2 H7 V0 L12 4 L7 8 V6 H1Z" fill={c.sky} /></Svg></Tool>
          </Cells>
        </Tools>
        <GroupTitle>Equipment</GroupTitle>
      </Group>

      <Group $w={115}>
        <Tools $pl={3} $gap={1}>
          <BigTool w={46} a="Show" b="All" icon={<Svg w={40} h={42}><Box3 x={0} y={6} s={22} /><Box3 x={13} y={19} s={22} /><Bulb x={33} y={6} r={6} /></Svg>} />
          <Cells $cols="29px 29px" $gap={3}>
            <Tool n="Hide others"><Svg w={24}><Box3 x={1} y={3} s={12} /><Box3 x={8} y={11} s={12} fill="#c9c9c9" /><Bulb x={19} y={4} r={2.6} fill={c.teal} /></Svg></Tool>
            <Tool n="Isolate connections" on w={29}><Svg w={24}><path d="M2 2 H6 V10 H2Z M7 2 H10 V10 H7Z M13 2 H16 V10 H13Z M17 2 H22 V10 H17Z" fill="#e4e4e4" /><path d="M12 12 Q17 19 14 21 Q12 23 10 21 Q7 19 12 12Z" fill={c.sky} /></Svg></Tool>
            <Tool n="Hide selected"><Svg w={24}><Box3 x={1} y={2} s={11} /><Box3 x={9} y={10} s={13} fill={c.sky} side="#5aa5e0" /><path d="M17 1 V8 M15 6 L17 8 L19 6" stroke="#eee" /></Svg></Tool>
            <Tool n="Insulation"><Svg w={24}><path d="M1 9 H23 V16 H1Z" fill="#c4c4c4" /><path d="M5 7 H9 L14 16 H10Z M14 9 H18 L20 18 H17Z" fill="#eee" /></Svg></Tool>
            <Tool n="Caps"><Svg w={24}><rect x="3" y="8" width="9" height="8" rx="2" fill="#ececec" /><rect x="12" y="10" width="9" height="4" fill="#bdbdbd" /></Svg></Tool>
            <Tool n="Welds"><Svg w={24}><path d="M2 7 H7 V17 H2Z M17 7 H22 V17 H17Z" fill="#858b95" /><path d="M7 9 L9 12 L7 15Z M17 9 L15 12 L17 15Z" fill="#858b95" /><circle cx="12" cy="12" r="4" fill="#4c7fb2" /></Svg></Tool>
          </Cells>
        </Tools>
        <GroupTitle>Visibility</GroupTitle>
      </Group>

      <Group $w={168}>
        <Tools $pl={4} $pt={6}>
          <Stack $gap={2}>
            <Select w={161} pl={2} gap={2} label="Visual style" value="Realistic" icon={<Svg w={20}><path d="M0 0 H20 V20 H0Z" fill="#5fc8c4" /><path d="M3 18 L7 3 L12 18Z" fill="#353a5c" /><path d="M10 9 L14 5 L18 8 V14 L13 18 L10 15Z" fill="#a81414" /><path d="M2 14 H9 V19 H2Z" fill="#5a2540" /></Svg>} />
            <Select w={161} pl={2} gap={0} label="Named view" value="Unsaved View" icon={<Svg w={20}><path d="M0 2 H20 V18 H0Z" fill="#a5a5a5" /><path d="M1 18 V3 H20 M4 18 V6 H20 M7 18 V9 H20" stroke="#f2f2f2" /><path d="M9 11 H20 V18 H9Z" fill="#8a8a8a" /></Svg>} />
            <TextTool><Svg w={24}><path d="M4 3 H21 V20 H4Z" fill={c.icon} /><path d="M2 7 V2 H7 M17 2 H22 V7 M22 17 V22 H17 M7 22 H2 V17" stroke="#9da3ac" /><path d="M7 9 L12 7 L17 9 V15 L12 18 L7 15Z" fill="#51a7e8" /><path d="M7 9 L12 11 L17 9" stroke="#fff" /></Svg>Single viewport<Caret w={6} /></TextTool>
          </Stack>
        </Tools>
        <GroupTitle>View <Caret /></GroupTitle>
      </Group>

      <Group>
        <Tools $pl={4} $gap={3}>
          <BigTool w={70} a="Layer" b="Properties" icon={<Svg w={42} h={42}><Sheet x={1} y={27} w={26} h={11} fill="#bbb" /><Sheet x={1} y={14} w={26} h={11} fill="#cfcfcf" /><Sheet x={1} y={2} w={26} h={11} fill="#e2e2e2" /><rect x="24" y="18" width="17" height="23" fill="#f2f2f2" /><rect x="27" y="21" width="11" height="9" fill={c.blue} stroke="#444" /><path d="M27 34 H38 M27 38 H38" stroke="#555" /></Svg>} />
          <Stack>
            <Select w={261} label="Layer" value="0" icon={<Svg w={92} h={22}><Bulb x={8} y={7} r={6} /><Sun x={32} y={11} r={9} /><Lock x={47} y={4} s={1.2} open /><rect x="73" y="2" width="18" height="18" fill="#e6eeff" /></Svg>} />
            <Line $gap={2}>
              <Tool n="Layer off"><Svg w={24}><Sheet x={3} y={3} w={12} h={6} /><Bulb x={17} y={14} r={4} fill={c.teal} /></Svg></Tool>
              <Tool n="Isolate layer"><Svg w={24}><Layers3 blue x={2} /><path d="M21 15 L15 22 M15 18 V22 H19" stroke="#eee" strokeWidth="1.400" /></Svg></Tool>
              <Tool n="Freeze layer"><Svg w={24}><Sheet x={3} y={3} w={12} h={6} /><path d="M17 11 V21 M12.500 13 L21.500 19 M21.500 13 L12.500 19" stroke={c.teal} strokeWidth="2" /></Svg></Tool>
              <Tool n="Lock layer"><Svg w={24}><Sheet x={2} y={3} w={12} h={6} /><Lock x={12} y={9} s={0.95} fill={c.teal} /></Svg></Tool>
              <TextTool><Svg w={28} h={24}><Layers3 x={3} blue /><Sheet x={3} y={6} w={14} h={7} fill={c.sky} /><circle cx="13" cy="5" r="4" fill="#d0d0d0" /></Svg>Make Current</TextTool>
            </Line>
            <Line $gap={2}>
              <Tool n="Layers on"><Svg w={24}><Layers3 x={2} /><Bulb x={18} y={15} r={4} /></Svg></Tool>
              <Tool n="Unisolate layers"><Svg w={24}><Layers3 blue x={2} /><path d="M14 22 L21 15 M17 15 H21 V19" stroke="#eee" strokeWidth="1.400" /></Svg></Tool>
              <Tool n="Thaw layers"><Svg w={24}><Layers3 x={2} /><Sun x={16} y={16} r={6} /></Svg></Tool>
              <Tool n="Unlock layer"><Svg w={24}><Sheet x={2} y={3} w={12} h={6} /><Lock x={9} y={9} s={0.95} open /></Svg></Tool>
              <TextTool><Svg w={28} h={24}><Layers3 x={3} /><path d="M12 13 L15 11 L22 19 L18 22Z" fill={c.yellow} /><path d="M17 14 L21 11 L23 13 L20 17Z" fill="#eee" /></Svg>Match Layer</TextTool>
            </Line>
          </Stack>
        </Tools>
        <GroupTitle>Layers <Caret /></GroupTitle>
      </Group>
    </Ribbon>
  </>
);

/* ------------------------------------------------------------------ */
/* Drawing file tabs                                                   */
/* ------------------------------------------------------------------ */

const FileBar = styled.nav`
  display: flex;
  align-items: stretch;
  height: 33px;
  padding: 1px 0 0 20px;
`;

const Slash = styled.i`
  align-self: center;
  width: 1px;
  height: 22px;
  margin: 0 ${(p) => p.$r ?? 15}px 0 ${(p) => p.$l ?? 16}px;
  background: #59616d;
  transform: skewX(-22deg);
`;

const FileTab = styled.div`
  display: flex;
  align-items: center;
  gap: 12px;
  height: 30px;
  align-self: flex-end;
  margin-left: 10px;
  padding: 0 16px 0 20px;
  background: ${c.panel};
  clip-path: polygon(10px 0, 100% 0, calc(100% - 10px) 100%, 0 100%);
  font-weight: 700;
`;

const FileTabs = () => (
  <FileBar>
    <Button aria-label="Drawings list"><Svg w={20} h={17}><path d="M0 1.500 H20 M0 8.500 H20 M0 15.500 H20" stroke="#e2e2e2" strokeWidth="2.600" /></Svg></Button>
    <Slash />
    <Button>Start</Button>
    <FileTab>
      <Button>05.02 piping</Button>
      <Button aria-label="Close drawing"><Svg w={12}><path d="M1 1 L11 11 M11 1 L1 11" stroke="#a9aeb6" strokeWidth="2.200" /></Svg></Button>
    </FileTab>
    <IconButton $w={44} $h={31} aria-label="New drawing"><Svg w={18}><path d="M9 0 V18 M0 9 H18" stroke="#e2e2e2" strokeWidth="2.600" /></Svg></IconButton>
    <Slash $l={3} />
  </FileBar>
);

/* ------------------------------------------------------------------ */
/* Side panels                                                         */
/* ------------------------------------------------------------------ */

const Body = styled.main`
  display: flex;
  flex: 1;
  min-height: 0;
  padding-top: 4px;
  background: ${c.panel};
  border-top: 1px solid ${c.dark};
`;

const Panel = styled.aside`
  display: flex;
  flex-direction: column;
  flex: 0 0 ${(p) => p.$w}px;
  min-width: 0;
  margin-top: 3px;
  overflow: hidden;
  font-family: ${(p) => (p.$wide ? wide : ui)};
`;

const PanelHead = styled.h2`
  display: flex;
  align-items: center;
  gap: 7px;
  height: 27px;
  flex: none;
  padding: 0 0 2px 8px;
  border-radius: 4px 4px 0 0;
  background: ${c.head};
  white-space: nowrap;
`;

const Grip = () => (
  <Svg w={4} h={10}><path d="M1 0 V10 M3 0 V10" stroke="#aab0b9" strokeDasharray="1 1" /></Svg>
);

const SideTabs = styled.div`
  display: flex;
  flex-direction: column;
  flex: 0 0 27px;
  margin-top: 33px;
  font-family: ${wide};
`;

const SideTab = styled(Button)`
  height: 160px;
  border: 1px solid #262c37;
  border-${(p) => (p.$side === "left" ? "right" : "left")}-color: ${(p) => (p.$on ? c.panel : "#262c37")};
  border-radius: ${(p) => (p.$side === "left" ? "5px 0 0 5px" : "0 5px 5px 0")};
  background: ${(p) => (p.$on ? c.panel : "#2f3541")};
  color: ${(p) => (p.$on ? c.text : c.dim)};
  span { writing-mode: vertical-rl; transform: rotate(180deg); }
`;

const VerticalTabs = ({ items, side }) => (
  <SideTabs>
    {items.map((t, i) => <SideTab key={t} $on={i === 0} $side={side}><span>{t}</span></SideTab>)}
  </SideTabs>
);

const PanelBody = styled.div`
  display: flex;
  flex-direction: column;
  flex: 1;
  min-height: 0;
  padding: 0 10px 31px 8px;
`;

const FieldLabel = styled.label`
  font: 14px/15px "Liberation Sans", Arial, sans-serif;
`;

const ProjectRow = styled.div`
  display: flex;
  justify-content: space-between;
  margin: 7px 2px 14px 0;
`;

const Combo = styled.div`
  position: relative;
  width: 246px;
  border: 1px solid #eef2f6;
  display: flex;
  background: linear-gradient(to left, #fff 22px, transparent 22px);
  select { padding-left: 20px; height: 26px; line-height: 26px; }
`;

const ComboArrow = styled.span` position: absolute; right: 6px; top: 10px; pointer-events: none; `;

const PrintBox = styled.div`
  display: flex;
  align-items: center;
  gap: 5px;
  width: 69px;
  border: 1px solid #eef2f6;
  border-width: 0 1px 1px 0;
  border-radius: 0 0 3px 0;
`;

const SectionHead = styled.div`
  display: flex;
  align-items: center;
  height: 24px;
  flex: none;
  padding: 0 1px 0 9px;
  background: ${c.head};
  h3 { flex: 1; font: 700 13px/24px ${ui}; }
`;

const Frame = styled.div`
  flex: ${(p) => p.$grow} 1 0;
  min-height: 0;
  margin-bottom: ${(p) => p.$mb || 0}px;
  border: 1px solid ${c.frame};
  overflow: hidden;
  display: flex;
  flex-direction: column;
`;

const SearchBox = styled.div`
  display: flex;
  align-items: center;
  margin: 12px 11px 10px 6px;
  height: 28px;
  flex: none;
  background: ${c.field};
  input { flex: 1; min-width: 0; border: 0; background: none; text-align: center; height: 22px; margin-bottom: 6px; padding: 0 0 0 24px; }
  input::placeholder { color: #b6bcc6; opacity: 1; }
`;

const Tree = styled.ul` padding-left: 9px; `;

const Node = styled.li`
  display: flex;
  align-items: center;
  height: 24px;
  padding-left: ${(p) => p.$indent}px;
`;

const Toggle = styled(Button)`
  width: 11px;
  height: 11px;
  border: 1px solid #9aa3b0;
  background: #f2f2f2;
`;

const Dots = styled.i`
  width: ${(p) => p.$w}px;
  border-top: 1px dotted #b9c1cc;
`;

const Branch = styled.i`
  align-self: flex-start;
  width: 1px;
  height: ${(p) => (p.$last ? 12 : 24)}px;
  border-left: 1px dotted #b9c1cc;
`;

const Trunk = styled.i`
  align-self: stretch;
  width: 24px;
  border-left: 1px dotted #b9c1cc;
`;

const NodeName = styled.span`
  margin-left: ${(p) => (p.$on ? 3 : 5)}px;
  padding: ${(p) => (p.$on ? "0 2px" : 0)};
  line-height: 24px;
  color: ${(p) => (p.$on ? "#111" : c.text)};
  background: ${(p) => (p.$on ? "#f2f2f2" : "none")};
`;

const DrawingIcon = ({ locked }) => (
  <Svg w={20}><path d="M1 0 H13 L18 5 V19 H1Z" fill="#2d6ab3" stroke="#cfd8e3" strokeWidth=".8" /><path d="M1 13 Q8 10 18 17 V19 H1Z" fill="#f5b81c" /><path d="M1 7 H15 M6 0 V13" stroke="#fff" strokeWidth=".8" /><path d="M4 5 H8 V9 H4Z" fill="#2d6ab3" stroke="#fff" />{locked && <Lock x={10} y={7} s={0.88} />}</Svg>
);

const PidIcon = ({ pipe }) => (
  <Svg w={20}><Doc x={2} y={1} w={16} h={18} /><path d="M2 8 H14 M8 1 V19" stroke="#5b6472" /><path d="M6 6 H10 V10 H6Z" fill={c.icon} stroke="#5b6472" />{pipe && <><circle cx="14" cy="15" r="4.500" fill="#ececec" stroke="#5b6472" /><circle cx="14" cy="15" r="2" fill="#777" /></>}</Svg>
);

const tree = [
  { d: 0, t: "-", n: "Project 1", i: <Svg w={20}><Roll s={0.46} y={1} /></Svg> },
  { d: 1, t: "+", n: "P&ID Drawings", i: <PidIcon /> },
  { d: 1, t: "-", n: "Plant 3D Drawings", i: <PidIcon pipe /> },
  { d: 2, n: "04 structure", i: <DrawingIcon /> },
  { d: 2, n: "05.02 piping", on: true, last: true, i: <DrawingIcon locked /> },
  { d: 1, t: "+", n: "Pipe Specs", i: <Svg w={20}><path d="M2 1 H13 L18 6 V19 H2Z" stroke={c.icon} /><path d="M13 1 V6 H18 M6 8 H12 M9 8 V13" stroke={c.icon} /><path d="M5 9 L14 16 V9 L5 16Z" fill={c.icon} /></Svg> },
  { d: 1, t: "+", n: "Related Files", i: <Svg w={20}><path d="M0 2 H8 L10 4 H20 V18 H0Z" fill={c.icon} /><path d="M0 6 H9 L11 4" stroke="#777" /></Svg> },
];

const details = [
  "Status: File is accessible",
  "Name: 05.02 piping.dwg",
  "File location: C:\\Users\\ADMIN\\Documents\\Fold",
  "Number:",
  "File is locked by user 'ADMIN' on machine 'MSI",
  "File size: 71.02KB (72,729 bytes)",
  "File creator: ADMIN",
  "Last saved: Monday, May 25, 2026 10:53:32 PM",
  "Last edited by: ADMIN",
  "Description:",
];

const DetailText = styled.div`
  flex: 1;
  padding: 8px 0 0 7px;
  white-space: nowrap;
`;

const ScrollTrack = styled.div`
  height: 22px;
  flex: none;
  padding: 9px 20px 0 21px;
  background: #f0f0f0;
  &::before { content: ""; display: block; width: 148px; height: 3px; border-radius: 2px; background: #858585; }
`;

const ProjectManager = () => (
  <Panel $w={347} $wide>
    <PanelHead><Grip />PROJECT MANAGER</PanelHead>
    <PanelBody>
      <FieldLabel htmlFor="project">Current Project:</FieldLabel>
      <ProjectRow>
        <Combo>
          <NativeSelect id="project" defaultValue="Project 1"><option>Project 1</option></NativeSelect>
          <ComboArrow><Svg w={10} h={6}><path d="M1 1 L5 5 L9 1" stroke="#444" /></Svg></ComboArrow>
        </Combo>
        <PrintBox>
          <IconButton $w={26} $h={26} aria-label="Publish"><Printer s={25} /></IconButton>
          <IconButton $w={20} $h={26} aria-label="Reports"><Svg w={20} h={24}><path d="M0 0 H12 V3 H3 V20 H0Z" fill="#bbb" /><Doc x={4} y={4} w={16} h={20} /><path d="M7 12 H9 M7 16 H9 M7 20 H9 M11 12 H17 M11 16 H17 M11 20 H17" stroke="#666" strokeWidth="1.500" /></Svg></IconButton>
          <Caret w={5} color="#111" />
        </PrintBox>
      </ProjectRow>
      <SectionHead>
        <h3>Project</h3>
        <IconButton $w={21} $h={24} aria-label="Find"><LensShape s={18} /></IconButton>
        <IconButton $w={21} $h={24} aria-label="New project item"><Svg w={18}><Roll s={0.42} y={2} /><Burst x={13} y={5} r={5} /></Svg></IconButton>
        <IconButton $w={21} $h={24} aria-label="Copy item"><Svg w={18}><path d="M0 0 H4 V14 H0Z M6 2 H15 V6 H11 V17 H6Z" fill={c.icon} /><Doc x={10} y={8} w={8} h={10} /></Svg></IconButton>
        <IconButton $w={21} $h={24} aria-label="Refresh"><Svg w={18}><path d="M2 8 A7 6 0 0 1 15 5 M16 10 A7 6 0 0 1 3 13" stroke="#3fd06d" strokeWidth="2.800" /><path d="M17 1 V8 H11Z M1 17 V10 H7Z" fill="#3fd06d" /></Svg></IconButton>
        <IconButton $w={22} $h={24} aria-label="Collapse project"><Svg w={5} h={3}><path d="M0 3 L2.500 0 L5 3Z" fill={c.icon} /></Svg></IconButton>
      </SectionHead>
      <Frame $grow={293} $mb={17}>
        <SearchBox>
          <input aria-label="Search project" placeholder="Search" />
          <IconButton $w={24} aria-label="Run search"><LensShape fill="#6a7487" /></IconButton>
        </SearchBox>
        <Tree>
          {tree.map((n) => (
            <Node key={n.n} $indent={n.t ? n.d * 24 : 29}>
              {n.t ? (
                <Toggle aria-label={n.t === "-" ? "Collapse" : "Expand"}>
                  <Svg w={7}><path d={n.t === "-" ? "M0 3.500 H7" : "M0 3.500 H7 M3.500 0 V7"} stroke="#27408b" /></Svg>
                </Toggle>
              ) : (
                <><Trunk /><Branch $last={n.last} /></>
              )}
              <Dots $w={n.t ? 8 : 12} />
              {n.i}
              <NodeName $on={n.on}>{n.n}</NodeName>
            </Node>
          ))}
        </Tree>
      </Frame>
      <SectionHead>
        <h3>Details</h3>
        <IconButton $w={21} $h={24} aria-label="Show details"><Svg w={18}><Doc w={14} h={18} /><path d="M6 10 H18 V14 H6Z" fill="#f2f2f2" stroke="#444" strokeWidth=".8" /></Svg></IconButton>
        <IconButton $w={21} $h={24} aria-label="Preview"><Svg w={18}><Doc w={17} h={16} /><circle cx="9" cy="11" r="3.500" fill="#bbb" stroke="#555" /><path d="M12 14 L15 18" stroke="#c79a63" strokeWidth="2" /></Svg></IconButton>
        <IconButton $w={21} $h={24} aria-label="History"><Svg w={18}><Doc w={14} h={17} /><path d="M2 4 H8 M2 7 H11 M2 10 H9 M2 13 H8" stroke="#666" /><circle cx="13" cy="13" r="4.500" fill="#eee" stroke="#555" /><path d="M13 10 V13 H15" stroke="#555" /></Svg></IconButton>
        <IconButton $w={22} $h={24} aria-label="Collapse details"><Svg w={5} h={3}><path d="M0 3 L2.500 0 L5 3Z" fill={c.icon} /></Svg></IconButton>
      </SectionHead>
      <Frame $grow={274}>
        <DetailText>{details.map((d) => <p key={d}>{d}</p>)}</DetailText>
        <ScrollTrack />
      </Frame>
    </PanelBody>
  </Panel>
);

const Palette = styled.div`
  display: flex;
  flex: 1;
  min-height: 0;
  overflow: hidden;
`;

const PaletteList = styled.div`
  flex: 1;
  min-width: 0;
  padding-left: 5px;
`;

const PaletteSection = styled.section`
  padding: ${(p) => (p.$first ? 5 : 0)}px 0 11px;
  border-bottom: 1px solid #2b323e;
  &:last-child { border: 0; }
`;

const PaletteTitle = styled.h3`
  height: 58px;
  padding-top: 24px;
  line-height: 22px;
  color: ${c.dim};
`;

const PaletteItem = styled(Button)`
  display: flex;
  justify-content: flex-start;
  gap: 5px;
  width: 100%;
  height: 51px;
  text-align: left;
  white-space: pre-line;
`;

const ScrollBar = styled.div`
  width: 6px;
  height: 163px;
  margin: 12px 3px 0 8px;
  border-radius: 3px;
  background: #536074;
`;

const Part = ({ kind }) => {
  if (kind === "custom")
    return <Svg w={47} h={34}><path d="M7 8 H13 V21 H7Z M14 6 H21 V24 H14Z M22 8 H27 V21 H22Z M29 8 H32 V21 H29Z M33 8 H37 V18 H33Z M15 2 H20 V5 H15Z" fill="#e2e2e2" /><path d="M7 17 H13 V21 H7Z M14 19 H21 V24 H14Z M22 17 H27 V21 H22Z" fill="#b8b8b8" /><path d="M21 3 L24 1 H41" stroke={c.icon} /><Pencil x={26} y={11} s={1.6} /></Svg>;
  if (kind === "disc")
    return <Svg w={47} h={40}><ellipse cx="29" cy="19" rx="12" ry="18" transform="rotate(-30 29 19)" fill="#e6ebf5" /><ellipse cx="27" cy="21" rx="11" ry="17" transform="rotate(-30 27 21)" fill="#858a94" /></Svg>;
  if (kind === "cap")
    return (
      <Svg w={47} h={36}>
        <path d="M12 22 Q13 15 17 11 L24 17 L30 10 L20 7 Q27 0 36 1 Q45 8 44 17 Q42 31 28 35 Q14 34 12 22Z" fill="#c2c7d1" />
        <path d="M20 7 Q28 0 36 1 Q44 6 44 14 Q36 8 30 12 L28 10Z" fill="#e4e7ee" />
        <path d="M27 35 Q24 22 44 13 Q45 30 27 35Z" fill="#989da8" />
        <path d="M19 8 L26 12 L24 17 L17 12Z" fill={c.panel} />
      </Svg>
    );
  if (kind === "coupling")
    return (
      <Svg w={47} h={44}>
        <path d="M7 2 H14" stroke="#9aa1ab" />
        <path d="M9 22 Q9 6 22 4 Q30 4 38 9 Q46 16 45 26 Q42 40 30 41 Q22 40 16 35 Q9 30 9 22Z" fill="#b3b9c4" />
        <path d="M16 34 Q11 18 26 5 M20 37 Q14 20 30 6" stroke="#868d99" />
        <ellipse cx="33" cy="25" rx="11" ry="15" transform="rotate(18 33 25)" fill="#cfd4de" stroke="#868d99" />
        <ellipse cx="30" cy="23" rx="7" ry="12" transform="rotate(32 30 23)" fill={c.panel} />
      </Svg>
    );
  return (
    <Svg w={47} h={42}>
      <path d="M7 2 H14" stroke="#9aa1ab" />
      <path d="M17 20 Q17 8 28 8 Q39 9 42 17 Q45 33 31 39 Q19 34 17 20Z" fill="#b4bac5" />
      <path d="M20 28 Q22 18 33 17 Q42 18 43 24 Q42 35 31 39 Q24 36 20 28Z" fill="#cfd4de" />
      {kind === "ellsw" && <path d="M24 33 Q26 38 32 36 Q40 32 41 22" stroke="#7d8490" />}
      <ellipse cx="32" cy="24" rx="5" ry="9" transform="rotate(58 32 24)" fill="#48505e" />
    </Svg>
  );
};

const palette = [
  { items: [["custom", "Add Custom Part"]] },
  { title: "Spec: CS150", items: [] },
  { title: "BlindFlange", items: [["disc", "FLANGE BLIND,FL,RF,150\n(CS150)"]] },
  { title: "Cap", items: [["cap", "CAP,SW,3000 (CS150)"], ["cap", "CAP,BV,40 (CS150)"]] },
  { title: "Coupling", items: [["coupling", "COUPLING,SW,3000\n(CS150)"]] },
  { title: "Elbow", items: [["ell", "ELL 45 LR,BV,40 (CS150)"], ["ellsw", "ELL 45,SW,3000 (CS150)"]] },
];

const ToolPalettes = () => (
  <Panel $w={255}>
    <PanelHead><Grip />TOOL PALETTES - AUTOCA...</PanelHead>
    <Palette>
      <PaletteList>
        {palette.map((s, i) => (
          <PaletteSection key={i} $first={i === 0}>
            {s.title && <PaletteTitle>{s.title}</PaletteTitle>}
            {s.items.map(([k, n]) => <PaletteItem key={n}><Part kind={k} />{n}</PaletteItem>)}
          </PaletteSection>
        ))}
      </PaletteList>
      <ScrollBar />
    </Palette>
  </Panel>
);

/* ------------------------------------------------------------------ */
/* Drawing area                                                        */
/* ------------------------------------------------------------------ */

const Center = styled.div`
  display: flex;
  flex-direction: column;
  flex: 1;
  min-width: 0;
  gap: 5px;
  margin: 0 7px 5px 6px;
`;

const Canvas = styled.section`
  position: relative;
  flex: 1;
  min-height: 0;
  overflow: hidden;
  background: #212830;
  > svg { position: absolute; inset: 0; width: 100%; height: 100%; }
`;

const At = styled.div`
  position: absolute;
  left: ${(p) => p.$x}px;
  top: ${(p) => p.$y}px;
`;

const ViewLabel = styled(At)` font: 14px/16px ${wide}; `;

const WindowButtons = styled.div`
  position: absolute;
  top: 8px;
  right: 5px;
  display: flex;
  gap: 1px;
`;

const Note = styled(At)`
  font: 24px/28px "Liberation Sans", Arial, sans-serif;
  color: #f80505;
  white-space: nowrap;
  text-shadow: 1px 2px 2px #000;
`;

const Tip = styled(At)`
  display: flex;
  align-items: center;
  justify-content: space-between;
  width: ${(p) => p.$w}px;
  height: ${(p) => p.$h || 26}px;
  padding: 0 4px 2px 5px;
  border: 1px solid #000;
  background: #999;
  color: #000;
  font-family: ${wide};
  white-space: nowrap;
`;

const LengthInput = styled.input`
  position: absolute;
  left: 883px;
  top: 274px;
  width: 90px;
  height: 26px;
  padding: 0 5px 2px;
  border: 1px solid #000;
  color: #fff;
  font-family: ${wide};
  background: linear-gradient(#0a78d6, #0a78d6) 5px 1px / 73px 20px no-repeat #fff;
`;

const ViewName = styled.button`
  position: absolute;
  right: 35px;
  top: 186px;
  display: flex;
  align-items: center;
  justify-content: space-between;
  width: 81px;
  height: 21px;
  padding: 0 3px;
  border: 2px solid #a7a9ba;
  border-radius: 5px;
  background: #8d8fa3;
  color: #c8cad6;
  font: 12px/16px "Liberation Sans", Arial, sans-serif;
`;

const NavBar = styled.nav`
  position: absolute;
  right: 2px;
  top: 237px;
  width: 40px;
  height: 259px;
  border: 1px solid #74797c;
  border-radius: 4px;
  background: rgba(115, 120, 120, 0.72);
`;

const verticals = Array.from({ length: 82 }, (_, k) => ({ x: 383.5 + 15.5 * k, major: k % 5 === 0 }));
const diagonals = Array.from({ length: 52 }, (_, k) => ({ y: 252 + 26 * (k - 30), major: k % 5 === 0 }));

const Scene = () => (
  <svg viewBox="380 227 1250 662" preserveAspectRatio="xMinYMin slice" fill="none" aria-hidden="true">
    <defs>
      <linearGradient id="face" x1="0" x2="1"><stop offset="0" stopColor="#b4b4b4" /><stop offset="1" stopColor="#8d8d8d" /></linearGradient>
    </defs>
    {verticals.filter((v) => !v.major).map((v) => <path key={v.x} d={`M${v.x} 227 V889`} stroke="#262d37" />)}
    {diagonals.filter((v) => !v.major).map((v) => <path key={v.y} d={`M380 ${v.y - 119} L1630 ${v.y + 558}`} stroke="#272e38" />)}
    {verticals.filter((v) => v.major).map((v) => <path key={v.x} d={`M${v.x} 227 V889`} stroke="#303743" />)}
    {diagonals.filter((v) => v.major).map((v) => <path key={v.y} d={`M380 ${v.y - 119} L1630 ${v.y + 558}`} stroke="#363d4a" />)}
    <path d="M553 227 L1236 597" stroke="#7d2229" />
    <path d="M1236.500 227 V597" stroke="#1f6d25" />

    <g>
      <path d="M624 610 L1045 509" stroke="#6f6f6f" strokeWidth="14" />
      <path d="M624 610 L1045 509" stroke="#444" strokeWidth="12.500" />
      <path d="M624 608 L1045 507" stroke="#555" strokeWidth="5" />
      <path d="M626 613 L1046 512" stroke="#858585" strokeWidth=".8" />
      <path d="M1045 509 Q1065 503 1065 480 V335" stroke="#6f6f6f" strokeWidth="14" />
      <path d="M1045 509 Q1065 503 1065 480 V335" stroke="#464646" strokeWidth="12.500" />
      <path d="M1045 507 Q1062 501 1063 480 V335" stroke="#555" strokeWidth="5" />
      <path d="M1065 337 Q1064 314 1079 316 L1262 416" stroke="#6f6f6f" strokeWidth="13" />
      <path d="M1065 337 Q1064 314 1079 316 L1262 416" stroke="#404040" strokeWidth="11.500" />
      <path d="M1064 337 Q1062 313 1080 315 L1262 414" stroke="#5d5d5d" strokeWidth="6" />
      <path d="M1069.500 335 V480 Q1067 503 1047 512" stroke="#8a8a8a" strokeWidth=".8" />
      <path d="M1058 337 q7 3 14 0 M1058 480 q7 3 14 0 M1043 502 q5 6 4 13 M1076 310 q-4 6 -2 12" stroke="#9c9c9c" />
      <ellipse cx="624" cy="610" rx="4" ry="7" fill="#3a3a3a" stroke="#999" />
      <path d="M624 620 v2" stroke="#bbb" strokeWidth="2" />
    </g>

    <ellipse cx="1283" cy="428" rx="55.300" ry="106" transform="rotate(-13.200 1283 428)" stroke="#f00" />
    <path d="M1236 324 L1247 347 M1282.500 317 V342 M1328 375 L1319 387 M1334 456 L1349 464 M1217 392 L1231 400 M1247 469 L1236 481 M1282.500 528 V539" stroke="#f00" />

    <path d="M1285 431 L1349 576" stroke="#5d636b" strokeWidth="15" />
    <path d="M1284 431 L1348 576" stroke="#8a919b" strokeWidth="11.500" />
    <path d="M1283 433 L1346 577" stroke="#a3a9b3" strokeWidth="4" />
    <path d="M1286 433 L1350 578" stroke="#f00" strokeWidth="1.200" />
    <ellipse cx="1349" cy="576" rx="7" ry="4" transform="rotate(-22 1349 576)" fill="#9ba1ab" />
    <path d="M1274 438 L1342 587 M1378 480 Q1377 540 1357 568" stroke="#aab0b8" strokeDasharray="1 4" />
    <path d="M1274 435 v5 M1378 477 v5 M1342 585 v5 M1350 575 v6" stroke="#fff" strokeWidth="2" />
    <path d="M1290 422.500 H1295 M1298 412.500 H1306 M1298 418 a5.500 5.500 0 1 1 -1 8" stroke="#f00" />
    <path d="M1354 567.500 H1362 M1354 573 a5.500 5.500 0 1 1 0 9 M1339 577.500 H1349 M1344.500 568 V582 M1341 577 L1345 570" stroke="#f00" />
    <path d="M1328.500 527 V626" stroke="#6fe86f" strokeWidth="1.500" />
    <path d="M1290 572 L1348 602" stroke="#f98c8c" />
    <path d="M1300 600 L1388 579" stroke="#8183ee" />

    <path d="M430 764 L465 782" stroke="#c04b4b" strokeWidth="7" />
    <path d="M431 762 L465 780" stroke="#dc7777" strokeWidth="2" />
    <path d="M465 782 L517 771" stroke="#3560b0" strokeWidth="7" />
    <path d="M466 780 L517 769" stroke="#7a9fe0" strokeWidth="2" />
    <path d="M465 727 V784" stroke="#3d8a3d" strokeWidth="8" />
    <path d="M466 727 V784" stroke="#7cc47c" strokeWidth="2" />
    <path d="M427 745 L442 759 M442 745 L427 759" stroke="#e03030" />
    <path d="M462 707 L469.500 715 L477 707 M469.500 715 V723" stroke="#12b512" />
    <path d="M512 751.500 H527 L512 766.500 H527" stroke="#1e64e6" />

    <g>
      <ellipse cx="1554" cy="359" rx="54" ry="21" stroke="#4a5059" strokeWidth="12" />
      <path d="M1523 309 L1560 302 L1586 312 L1585 355 L1548 366 L1524 351Z" fill="#a5a5a5" />
      <path d="M1523 309 L1548 320 V366 L1524 351Z" fill="url(#face)" />
      <path d="M1548 320 L1586 312 L1585 355 L1548 366Z" fill="#adadad" />
      <path d="M1523 309 L1560 302 L1586 312 L1548 320Z" fill="#bcbcbc" />
      <path d="M1523 309 L1548 320 L1586 312 M1548 320 V366" stroke="#5f6368" strokeDasharray="4 2" />
      <rect x="1542" y="318" width="13" height="10" fill="#8d94a3" opacity=".7" />
    </g>
    <g fontFamily="'Liberation Sans', sans-serif" fontWeight="700">
      <text fill="#4b4f55" fontSize="9" transform="matrix(.6 .32 0 1.200 1525 337)">BOTTOM</text>
      <text fill="#4b4f55" fontSize="9" transform="matrix(0 1 -1 -.1 1564 329)">LEFT</text>
      <text fill="#4b4f55" fontSize="9" transform="matrix(-.8 -.35 .8 -.3 1562 313)">2HZ</text>
      <text fill="#b9bcc0" fontSize="15" transform="matrix(.3 -.9 1 .2 1497 376)">S</text>
      <text fill="#b9bcc0" fontSize="15" transform="matrix(.9 .3 -.6 .7 1581 381)">E</text>
      <text fill="#b9bcc0" fontSize="12" transform="matrix(.9 .2 -.6 .6 1593 346)">N</text>
    </g>
  </svg>
);

const Drawing = () => (
  <Canvas>
    <Scene />
    <ViewLabel $x={4} $y={7}>[−][Custom View][Realistic]</ViewLabel>
    <WindowButtons>
      <IconButton $w={24} $h={20} aria-label="Minimize view"><Svg w={14}><rect x="0" y="8" width="13" height="4" fill="#eee" /></Svg></IconButton>
      <IconButton $w={24} $h={20} aria-label="Restore view"><Svg w={14}><path d="M4 1 H13 V9" stroke="#eee" strokeWidth="2" /><rect x="1" y="4" width="8" height="8" stroke="#eee" strokeWidth="2.500" /></Svg></IconButton>
      <IconButton $w={24} $h={20} aria-label="Close view"><Svg w={14}><path d="M2 1 L11 11 M11 1 L2 11" stroke="#eee" strokeWidth="3" /></Svg></IconButton>
    </WindowButtons>
    <Note $x={757} $y={41}>Ctrl+ Right-click to switch plane</Note>
    <Tip $x={868} $y={164} $w={29}>0"</Tip>
    <Tip $x={896} $y={163} $w={28}>1'</Tip>
    <Tip $x={879} $y={182} $w={31}>0"</Tip>
    <LengthInput aria-label="Length" defaultValue={"6'-4 13/16\""} />
    <Tip $x={972} $y={298} $w={39}>45°</Tip>
    <Tip $x={965} $y={383} $w={184} $h={29}>
      Specify next point or
      <Svg w={13}><rect width="13" height="13" fill="#e3e3e3" /><path d="M6.500 2 V9 M3.500 6 L6.500 9 L9.500 6 M3 11 H10" stroke="#666" /></Svg>
    </Tip>
    <ViewName>Unnamed<Svg w={10} h={7}><path d="M0 1 H10 L5 6Z" stroke="#c8cad6" /></Svg></ViewName>
    <NavBar aria-label="Navigation">
      <Svg w={38} h={257}>
        <g stroke="#484d54" strokeWidth="1.500">
          <circle cx="33" cy="6" r="4" fill="#52575c" /><path d="M31 4 L35 8 M35 4 L31 8" stroke="#888" strokeWidth="1" />
          <path d="M20 21 H34 V35 a14 14 0 1 1 -14 -14Z" /><circle cx="20" cy="35" r="8" /><circle cx="20" cy="35" r="12" strokeDasharray="6 3" />
          <path d="M0 68 H38" stroke="#80858a" strokeWidth="1" />
          <path d="M12 96 L6 86 Q8 84 13 89 L12 77 Q15 75 16 83 L18 74 Q21 74 20 83 L24 74 Q27 75 24 84 L30 78 Q32 80 29 86 L26 98 Q20 103 12 96Z" />
          <path d="M6 110 L23 127 M23 110 L6 127 M6 115 V110 H11 M18 110 H23 V115 M6 122 V127 H11" /><circle cx="25" cy="127" r="6" /><path d="M29 131 L34 136" strokeWidth="3" />
          <path d="M16 182 V162 H12 L18.500 155 L25 162 H21 V182Z" /><ellipse cx="19" cy="171" rx="13" ry="6" /><path d="M5 175 L10 170 V180Z" fill="#484d54" />
          <path d="M0 202 H38" stroke="#80858a" strokeWidth="1" />
          <path d="M5 207 H12 V214 H5Z M15 207 H22 V214 H15Z M25 207 H32 V214 H25Z M5 218 H25 V234 H5Z" /><path d="M11 222 V231 L19 226.500Z" fill="#484d54" />
          <circle cx="33" cy="251" r="4" /><path d="M30 251 H36" />
        </g>
        <path d="M16 60 H23 L19.500 63Z M16 147 H23 L19.500 150Z M16 193 H23 L19.500 196Z" fill="#3f444b" />
      </Svg>
    </NavBar>
  </Canvas>
);

const Command = styled.section`
  display: flex;
  height: 85px;
  flex: none;
  background: #2b313d;
  font: 15px/18px ${mono};
  color: #000;
`;

const CommandTools = styled.div`
  display: flex;
  flex-direction: column;
  align-items: center;
  gap: 4px;
  width: 30px;
  flex: none;
  padding-top: 5px;
`;

const CommandText = styled.div`
  flex: 1;
  min-width: 0;
  padding: 1px 1px 1px 0;
`;

const History = styled.div`
  height: 36px;
  padding-left: 4px;
  background: #c8c8c8;
  white-space: nowrap;
`;

const Prompt = styled.div`
  display: flex;
  flex-wrap: wrap;
  align-content: flex-start;
  align-items: center;
  column-gap: 5px;
  height: 46px;
  margin-top: 1px;
  padding: 2px 4px 0 5px;
  background: #fff;
  line-height: 22px;
  white-space: nowrap;
  b { font-weight: 700; }
`;

const Joined = styled.span`
  display: inline-flex;
  align-items: center;
  gap: 2px;
`;

const Chip = styled(Button)`
  gap: 0;
  height: 21px;
  padding: 0 1px;
  border-radius: 3px;
  background: #d2d2d2;
  i { font-style: normal; color: #1313f0; }
`;

const Option = ({ a, k, b }) => <Chip>{a}<i>{k}</i>{b}</Chip>;

const options = [
  { k: "S", b: "ize" },
  { k: "SP", b: "ecification" },
  { k: "P", b: "lane" },
  { k: "C", b: "utbackelbow" },
  { k: "R", b: "ollelbow" },
  { k: "ST", b: "ub-in" },
  { a: "pipe", k: "BE", b: "nd" },
  { k: "E", b: "levation" },
  { a: "routing", k: "O", b: "ffset" },
  { a: "base", k: "CO", b: "mponent" },
];

const CommandLine = () => (
  <Command>
    <CommandTools>
      <Svg w={22} h={2}><path d="M0 1 H22" stroke="#e2e2e2" strokeDasharray="2 1" /></Svg>
      <IconButton $w={24} $h={34} aria-label="Close command line"><Svg w={12}><path d="M1 1 L11 11 M11 1 L1 11" stroke="#dcdcdc" strokeWidth="2.200" /></Svg></IconButton>
      <IconButton $w={24} $h={22} aria-label="Customize"><Svg w={20}><path d="M2 18 L11 9" stroke={c.icon} strokeWidth="3.500" /><path d="M18 5 L14 8 L12 6 L15 2 Q9 0 9 7 L13 11 Q20 11 18 5Z" fill={c.icon} /></Svg></IconButton>
    </CommandTools>
    <CommandText>
      <History>
        <div>Specify next point or [pipeFitting/Size/SPecification/Plane/Cutbackelbow/Rollelbow/STub-in/pipeBEnd/Elevation/routingOffset/</div>
        <div>baseCOmponent/Undo]: _u</div>
      </History>
      <Prompt>
        <Svg w={34} h={20}><Tube x={1} y={7} s={0.5} /><Burst x={14} y={6} r={5} /><path d="M23 8 H33 L28 13Z" fill="#666" /></Svg>
        <b>PLANTPIPEADD</b>
        <Joined>
          <span>Specify next point or [</span>
          <Option a="pipe" k="F" b="itting" />
        </Joined>
        {options.map((o) => <Option key={o.b} {...o} />)}
        <Joined>
          <Option k="U" b="ndo" />
          <span>]:</span>
        </Joined>
      </Prompt>
    </CommandText>
  </Command>
);

/* ------------------------------------------------------------------ */
/* Status bar                                                          */
/* ------------------------------------------------------------------ */

const Status = styled.footer`
  display: flex;
  gap: 3px;
  height: 36px;
  flex: none;
  padding: 2px 1px 3px 2px;
  background: ${c.dark};
`;

const Cell = styled.div`
  display: flex;
  align-items: center;
  gap: 1px;
  flex: ${(p) => (p.$grow ? 1 : "none")};
  margin-right: ${(p) => (p.$grow ? 7 : 0)}px;
  background: ${c.panel};
`;

const StatusButton = styled(Button)`
  width: ${(p) => p.$w || 30}px;
  height: ${(p) => (p.$on ? 29 : 31)}px;
  background: ${(p) => (p.$on ? c.active : "none")};
`;

const Cursor = ({ mark }) => (
  <Svg w={24}>
    <path d="M11 2 L14 12 L20 21 L14 18 H8 L2 21 L8 12Z" fill="#e4e4e4" />
    {mark === "o" && <circle cx="19" cy="6" r="3.500" stroke="#e4e4e4" />}
    {mark === "z" && <path d="M20 2 L16 7 H20 L16 12" stroke="#e4e4e4" strokeWidth="1.500" />}
  </Svg>
);

const S = ({ n, on, w, children }) => <StatusButton $on={on} $w={w} aria-label={n}>{children}</StatusButton>;

const StatusBar = () => (
  <Status>
    <Cell $grow />
    <Cell><StatusButton $w={59}>MODEL</StatusButton></Cell>
    <Cell>
      <S n="Grid" on w={28}><Svg w={20}><path d="M5.500 1 V20 M10.500 1 V20 M15.500 1 V20 M1 5.500 H20 M1 10.500 H20 M1 15.500 H20" stroke="#fff" strokeWidth="1.200" /></Svg></S>
      <S n="Snap"><Svg w={16}>{[0, 6, 12].map((x) => [0, 6, 12].map((y) => <rect key={`${x}-${y}`} x={x} y={y} width="3" height="3" fill={c.icon} />))}</Svg></S>
      <S n="Snap options" w={20}><Caret w={9} /></S>
    </Cell>
    <Cell>
      <S n="Ortho"><Svg w={22}><path d="M1.500 1 V20.500 H21 M1.500 14.500 H7.500 V20.500" stroke={c.icon} /></Svg></S>
      <S n="Polar" w={32}><Svg w={22}><circle cx="10" cy="12" r="8" stroke={c.icon} /><path d="M10 12 L18 2 M10 12 H22" stroke={c.icon} /></Svg></S>
      <S n="Polar options" w={20}><Caret w={9} /></S>
      <S n="Isodraft"><Svg w={22}><path d="M3 3 L18 18" stroke="#b94f56" strokeWidth="1.400" /><path d="M11 1 V21" stroke="#5fc789" strokeWidth="1.400" /><rect x="9.500" y="9.500" width="3" height="3" fill={c.panel} stroke={c.icon} /></Svg></S>
      <S n="Isodraft options" w={18}><Caret w={9} /></S>
    </Cell>
    <Cell>
      <S n="Object tracking" on w={28}><Svg w={22}><path d="M16 3 L2 18.500 H21" stroke="#fff" strokeWidth="1.200" /><rect x="7" y="10" width="4" height="4" fill="#fff" /></Svg></S>
      <i />
      <S n="Object snap" on w={28}><Svg w={22}><path d="M7 4.500 H20.500 V20.500 H4.500 V7" stroke="#fff" strokeWidth="1.200" /><rect x="2" y="2" width="5" height="5" stroke="#fff" /></Svg></S>
      <S n="Snap list" w={21}><Caret w={9} /></S>
    </Cell>
    <Cell>
      <S n="Annotation visibility" on w={28}><Cursor mark="o" /></S>
      <S n="Auto scale"><Cursor mark="z" /></S>
      <S n="Annotation scale icon" w={28}><Cursor /></S>
      <StatusButton $w={42}>1:1 <Caret w={9} /></StatusButton>
    </Cell>
    <Cell>
      <S n="Workspace switching" w={29}><Svg w={22}><GearShape x={11} y={11} r={10} /></Svg></S>
      <S n="Workspace options" w={20}><Caret w={9} /></S>
      <S n="Annotation monitor" w={30}><Svg w={20}><path d="M10 0 V20 M0 10 H20" stroke="#e2e2e2" strokeWidth="2.600" /></Svg></S>
    </Cell>
    <Cell><S n="Isolate objects"><Svg w={20}><rect x="1" y="1" width="7" height="7" stroke={c.icon} /><circle cx="15" cy="9" r="4.500" stroke={c.icon} /><path d="M8 12 L12 19 H4Z" stroke={c.icon} /></Svg></S></Cell>
    <Cell><S n="Specs" w={32}><Svg w={24}><path d="M2 1 H18 L23 6 V23 H2Z" fill="#25425c" stroke={c.blue} strokeWidth="1.500" /><path d="M6 11 L18 19 V11 L6 19Z" stroke={c.blue} strokeWidth="1.500" /><path d="M12 15 V8 M8 7.500 H16 M5 4 H10" stroke={c.blue} /></Svg></S></Cell>
    <Cell><S n="Clean screen"><Svg w={22}><rect x="1" y="4" width="20" height="15" stroke={c.icon} /><path d="M13 9.500 L17 6.500 M13.500 6.500 H17.500 V10 M9 13.500 L5 16 M4.500 12.500 V16.500 H8.500" stroke={c.icon} strokeWidth="1.400" /></Svg></S></Cell>
    <Cell><S n="Customization"><Svg w={20}><path d="M0 2 H20 M0 10 H20 M0 18 H20" stroke="#e2e2e2" strokeWidth="2" /></Svg></S></Cell>
  </Status>
);

export default function App() {
  return (
    <Shell>
      <Global />
      <TopBar />
      <RibbonBar />
      <FileTabs />
      <Body>
        <ProjectManager />
        <VerticalTabs side="right" items={["Source Files", "Orthographic DWG", "Isometric DWG"]} />
        <Center>
          <Drawing />
          <CommandLine />
        </Center>
        <VerticalTabs side="left" items={["Dynamic Pipe Spec", "Pipe Supports Spec", "Instrumentation Spec"]} />
        <ToolPalettes />
      </Body>
      <StatusBar />
    </Shell>
  );
}
